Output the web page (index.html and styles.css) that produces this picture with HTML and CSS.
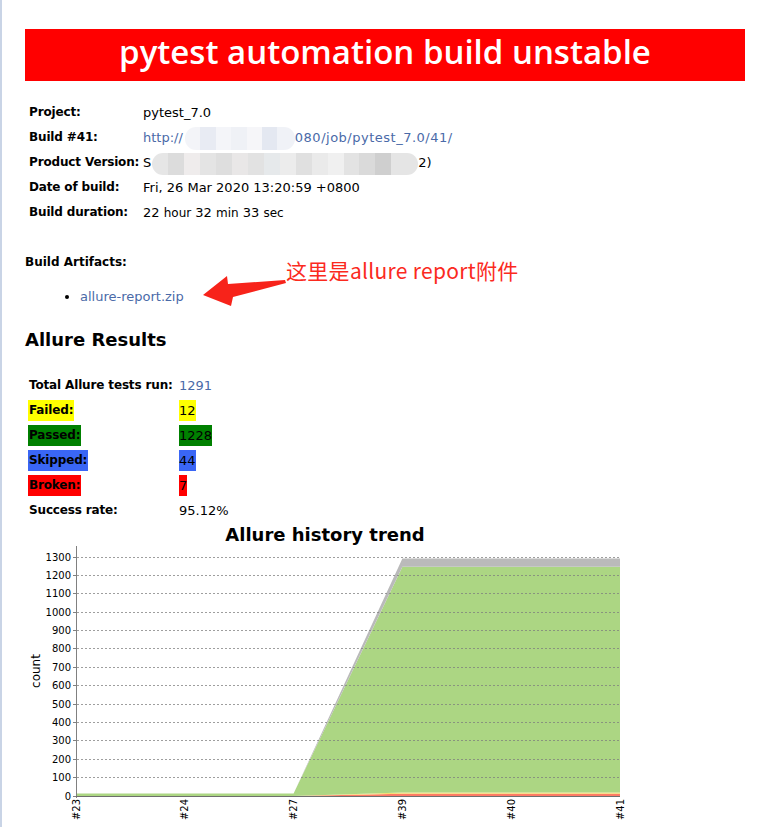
FILE: index.html
```html
<!DOCTYPE html>
<html>
<head>
<meta charset="utf-8">
<title>pytest automation build unstable</title>
<link rel="stylesheet" href="styles.css">
</head>
<body>
<div class="page">
  <h1 class="banner">pytest automation build unstable</h1>

  <div class="info">
    <div class="lbl">Project:</div><div class="val">pytest_7.0</div>
    <div class="lbl">Build #41:</div><div class="val link">http://<span class="blur blur-url"></span><span class="spaced">080/job/pytest_7.0/41/</span></div>
    <div class="lbl">Product Version:</div><div class="val">S<span class="blur blur-ver"></span>2)</div>
    <div class="lbl">Date of build:</div><div class="val">Fri, 26 Mar 2020 13:20:59 +0800</div>
    <div class="lbl">Build duration:</div><div class="val">22 <span class="small">hour</span> 32 <span class="small">min</span> 33 <span class="small">sec</span></div>
  </div>

  <div class="artifacts-title">Build Artifacts:</div>
  <ul class="artifacts">
    <li><a class="link" href="#">allure-report.zip</a></li>
  </ul>

  <h2 class="section">Allure Results</h2>

  <div class="results">
    <div class="lbl">Total Allure tests run:</div><div class="val link">1291</div>
    <div class="lbl"><span class="hl hl-failed">Failed:</span></div><div class="val"><span class="hv hl-failed">12</span></div>
    <div class="lbl"><span class="hl hl-passed">Passed:</span></div><div class="val"><span class="hv hl-passed">1228</span></div>
    <div class="lbl"><span class="hl hl-skipped">Skipped:</span></div><div class="val"><span class="hv hl-skipped">44</span></div>
    <div class="lbl"><span class="hl hl-broken">Broken:</span></div><div class="val"><span class="hv hl-broken">7</span></div>
    <div class="lbl">Success rate:</div><div class="val">95.12%</div>
  </div>

  <div class="chart">
    <div class="chart-title">Allure history trend</div>
    <svg class="chart-svg" width="610" height="280" viewBox="0 0 610 280" xmlns="http://www.w3.org/2000/svg">
      <!-- areas -->
      <polygon fill="#fd7b65" points="51,250 159.8,250 268.6,250 377.4,247.8 486.2,247.8 595,247.8 595,250 51,250"/>
      <polygon fill="#f7dc72" points="51,250 268.6,250 377.4,246.5 486.2,246.5 595,246.5 595,247.8 486.2,247.8 377.4,247.8 268.6,250"/>
      <polygon fill="#acd683" points="51,247.6 159.8,247.6 268.6,247.6 377.4,20.7 486.2,20.7 595,20.7 595,246.5 486.2,246.5 377.4,246.5 268.6,250 51,250"/>
      <polygon fill="#bababa" points="268.6,247.6 377.4,12.6 486.2,12.6 595,12.6 595,20.7 486.2,20.7 377.4,20.7 268.6,247.6"/>
      <!-- grid -->
      <g stroke="#7d7d7d" stroke-opacity="0.75" stroke-width="1" stroke-dasharray="2 2">
        <line x1="52" y1="231.5" x2="595" y2="231.5"/>
        <line x1="52" y1="213.5" x2="595" y2="213.5"/>
        <line x1="52" y1="194.5" x2="595" y2="194.5"/>
        <line x1="52" y1="176.5" x2="595" y2="176.5"/>
        <line x1="52" y1="158.5" x2="595" y2="158.5"/>
        <line x1="52" y1="139.5" x2="595" y2="139.5"/>
        <line x1="52" y1="121.5" x2="595" y2="121.5"/>
        <line x1="52" y1="102.5" x2="595" y2="102.5"/>
        <line x1="52" y1="84.5" x2="595" y2="84.5"/>
        <line x1="52" y1="66.5" x2="595" y2="66.5"/>
        <line x1="52" y1="47.5" x2="595" y2="47.5"/>
        <line x1="52" y1="29.5" x2="595" y2="29.5"/>
        <line x1="52" y1="11.5" x2="595" y2="11.5"/>
      </g>
      <!-- axes -->
      <line x1="51.5" y1="0" x2="51.5" y2="252" stroke="#808080" stroke-width="1"/>
      <line x1="51" y1="250.5" x2="595" y2="250.5" stroke="#6e6e6e" stroke-width="1"/>
      <g stroke="#808080" stroke-width="1">
        <line x1="48" y1="250.5" x2="51" y2="250.5"/>
        <line x1="48" y1="231.5" x2="51" y2="231.5"/>
        <line x1="48" y1="213.5" x2="51" y2="213.5"/>
        <line x1="48" y1="194.5" x2="51" y2="194.5"/>
        <line x1="48" y1="176.5" x2="51" y2="176.5"/>
        <line x1="48" y1="158.5" x2="51" y2="158.5"/>
        <line x1="48" y1="139.5" x2="51" y2="139.5"/>
        <line x1="48" y1="121.5" x2="51" y2="121.5"/>
        <line x1="48" y1="102.5" x2="51" y2="102.5"/>
        <line x1="48" y1="84.5" x2="51" y2="84.5"/>
        <line x1="48" y1="66.5" x2="51" y2="66.5"/>
        <line x1="48" y1="47.5" x2="51" y2="47.5"/>
        <line x1="48" y1="29.5" x2="51" y2="29.5"/>
        <line x1="48" y1="11.5" x2="51" y2="11.5"/>
      </g>
      <!-- y labels -->
      <g class="tick" text-anchor="end">
        <text x="46" y="254">0</text>
        <text x="46" y="235">100</text>
        <text x="46" y="217">200</text>
        <text x="46" y="198">300</text>
        <text x="46" y="180">400</text>
        <text x="46" y="162">500</text>
        <text x="46" y="143">600</text>
        <text x="46" y="125">700</text>
        <text x="46" y="106">800</text>
        <text x="46" y="88">900</text>
        <text x="46" y="70">1000</text>
        <text x="46" y="51">1100</text>
        <text x="46" y="33">1200</text>
        <text x="46" y="15">1300</text>
      </g>
      <text class="axis-label" transform="translate(15,125) rotate(-90)" text-anchor="middle">count</text>
      <!-- x labels -->
      <g class="tick" text-anchor="end">
        <text transform="translate(54.5,253) rotate(-90)">#23</text>
        <text transform="translate(163.3,253) rotate(-90)">#24</text>
        <text transform="translate(272.1,253) rotate(-90)">#27</text>
        <text transform="translate(380.9,253) rotate(-90)">#39</text>
        <text transform="translate(489.7,253) rotate(-90)">#40</text>
        <text transform="translate(598.5,253) rotate(-90)">#41</text>
      </g>
    </svg>
  </div>
</div>

<div class="note">这里是allure report附件</div>
<svg class="note-arrow" width="92" height="36" viewBox="0 0 92 36" xmlns="http://www.w3.org/2000/svg">
  <polygon fill="#f7231a" points="3,21 27,2 28,10 85,6 86,9 33,23 31,32"/>
</svg>
</body>
</html>
```

FILE: styles.css
```css
html, body {
  margin: 0;
  padding: 0;
}

body {
  position: relative;
  min-height: 100vh;
  box-sizing: border-box;
  border-left: 2px solid #c9d4e6;
  background: #fff;
  color: #000;
  font-family: "DejaVu Sans", Verdana, sans-serif;
  font-size: 13px;
}

.page {
  padding: 29px 0 0 23px;
}

.banner {
  box-sizing: border-box;
  width: 720px;
  height: 52px;
  margin: 0;
  padding-bottom: 6px;
  background: #ff0000;
  color: #fff;
  text-align: center;
  font-family: "Open Sans", sans-serif;
  font-weight: 600;
  font-size: 33px;
  line-height: 46px;
}

.info {
  display: grid;
  grid-template-columns: 114px auto;
  margin: 19px 0 0 4px;
  line-height: 25px;
}

.results {
  display: grid;
  grid-template-columns: 150px auto;
  margin: 21px 0 0 4px;
  line-height: 25px;
}

.lbl {
  font-weight: bold;
  font-size: 12px;
  letter-spacing: -0.15px;
  white-space: nowrap;
}

.val {
  font-size: 13px;
  white-space: nowrap;
}

.small {
  font-size: 12px;
}

.link {
  color: #4a6aa8;
  text-decoration: none;
}

.spaced {
  letter-spacing: 0.5px;
}

.blur {
  display: inline-block;
  height: 23px;
  vertical-align: middle;
  border-radius: 11px;
}

.blur-url {
  width: 110px;
  margin-left: 2px;
  background: linear-gradient(90deg,
    #f3f4f8 0 14%, #e8ebf3 14% 28%, #f4f5f9 28% 42%, #eff1f6 42% 56%,
    #f6f6f9 56% 70%, #e4e8f1 70% 84%, #f0f2f7 84% 100%);
}

.blur-ver {
  width: 266px;
  height: 22px;
  margin-left: 1px;
  background: linear-gradient(90deg,
    #e6e6e6 0 6%, #dcdcdc 6% 12%, #efecec 12% 18%, #e4e4e4 18% 24%,
    #dedede 24% 30%, #e9e7e7 30% 36%, #e2e2e2 36% 42%, #e6e9eb 42% 48%,
    #ececec 48% 54%, #e0e0e0 54% 60%, #eaeaea 60% 66%, #f0f0f0 66% 72%,
    #e3e3e3 72% 78%, #dadada 78% 84%, #cfcfcf 84% 90%, #e5e5e5 90% 100%);
}

.artifacts-title {
  margin-top: 24px;
  font-weight: bold;
  font-size: 12px;
  line-height: 25px;
}

.artifacts {
  margin: 9px 0 0;
  padding-left: 55px;
  line-height: 25px;
}

.section {
  margin: 18px 0 0;
  font-size: 18px;
  font-weight: bold;
  line-height: 25px;
}

.hl {
  display: inline-block;
  line-height: 21px;
  padding: 0 1px;
  margin-left: -1px;
}

.hv {
  display: inline-block;
  line-height: 21px;
}

.hl-failed { background: #ffff00; }
.hl-passed { background: #008000; }
.hl-skipped { background: #3a66f5; }
.hl-broken { background: #ff0000; }

.chart {
  width: 600px;
  margin-top: 1px;
}

.chart-title {
  text-align: center;
  font-weight: bold;
  font-size: 18px;
  line-height: 22px;
}

.chart-svg {
  display: block;
  overflow: visible;
}

.tick {
  font-family: "DejaVu Sans", sans-serif;
  font-size: 10px;
  fill: #000;
}

.axis-label {
  font-family: "DejaVu Sans", sans-serif;
  font-size: 12px;
  fill: #000;
}

.note {
  position: absolute;
  left: 284px;
  top: 257px;
  color: #fb2a1e;
  font-family: "Noto Sans CJK SC", sans-serif;
  font-size: 21px;
  line-height: 26px;
  letter-spacing: 0.3px;
  white-space: nowrap;
}

.note-arrow {
  position: absolute;
  left: 198px;
  top: 274px;
}
```
